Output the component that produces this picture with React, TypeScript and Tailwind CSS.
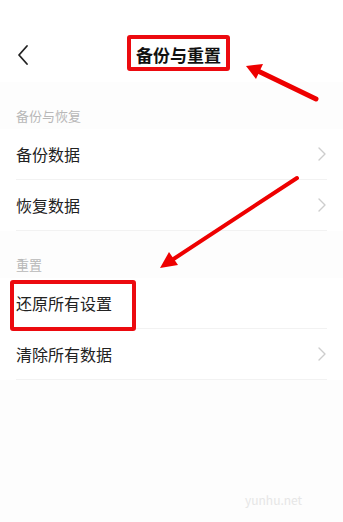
import React from 'react';

const font = { fontFamily: '"Noto Sans CJK SC", "Noto Sans", sans-serif' };

const Chevron = () => (
  <svg width="8" height="14" viewBox="0 0 8 14" fill="none">
    <path d="M1 1l6 6-6 6" stroke="#cdcdcd" strokeWidth="1.4" strokeLinecap="round" strokeLinejoin="round" />
  </svg>
);

const Row: React.FC<{ label: string; arrow?: boolean }> = ({ label, arrow = true }) => (
  <div className="px-4">
    <div className="h-[51px] flex items-center justify-between border-b border-[#f2f2f2]">
      <span className="text-[16px] text-[#222]">{label}</span>
      {arrow && <span className="pr-[1px]"><Chevron /></span>}
    </div>
  </div>
);

const SectionLabel: React.FC<{ text: string }> = ({ text }) => (
  <div className="h-[47px] flex items-end px-4 pb-[4px]">
    <span className="text-[13px] text-[#b8b8b8]">{text}</span>
  </div>
);

export default function App() {
  return (
    <div className="relative w-[343px] h-[522px] bg-[#fdfdfd] overflow-hidden" style={font}>
      {/* header */}
      <div className="h-[82px] pt-[28px] flex items-center relative bg-white">
        <div className="absolute left-[16px] top-[44px]">
          <svg width="14" height="22" viewBox="0 0 14 22" fill="none">
            <path d="M11 2L3 11l8 9" stroke="#222" strokeWidth="1.8" strokeLinecap="round" strokeLinejoin="round" />
          </svg>
        </div>
        <div className="flex-1 text-center text-[17px] font-bold text-[#111] pl-[14px]">备份与重置</div>
      </div>

      <SectionLabel text="备份与恢复" />
      <div className="bg-white">
        <Row label="备份数据" />
        <Row label="恢复数据" />
      </div>

      <SectionLabel text="重置" />
      <div className="bg-white">
        <Row label="还原所有设置" arrow={false} />
        <Row label="清除所有数据" />
      </div>

      {/* annotation boxes */}
      <div className="absolute left-[127px] top-[35px] w-[103px] h-[36px] border-[4px] border-[#ec0a0f] rounded-[3px]" />
      <div className="absolute left-[10px] top-[280px] w-[126px] h-[51px] border-[4px] border-[#ec0a0f] rounded-[3px]" />

      {/* annotation arrows */}
      <svg className="absolute left-0 top-0" width="343" height="522" viewBox="0 0 343 522">
        <line x1="316" y1="99" x2="258" y2="71" stroke="#ee0000" strokeWidth="5" strokeLinecap="round" />
        <polygon points="246,66 263,64 256,79" fill="#ee0000" />
        <line x1="297" y1="178" x2="172" y2="260" stroke="#ee0000" strokeWidth="4" strokeLinecap="round" />
        <polygon points="160,268 169,252 178,265" fill="#ee0000" />
      </svg>

      <div className="absolute left-[245px] top-[491px] text-[12px] text-[#e6e6e6]">yunhu.net</div>
    </div>
  );
}
